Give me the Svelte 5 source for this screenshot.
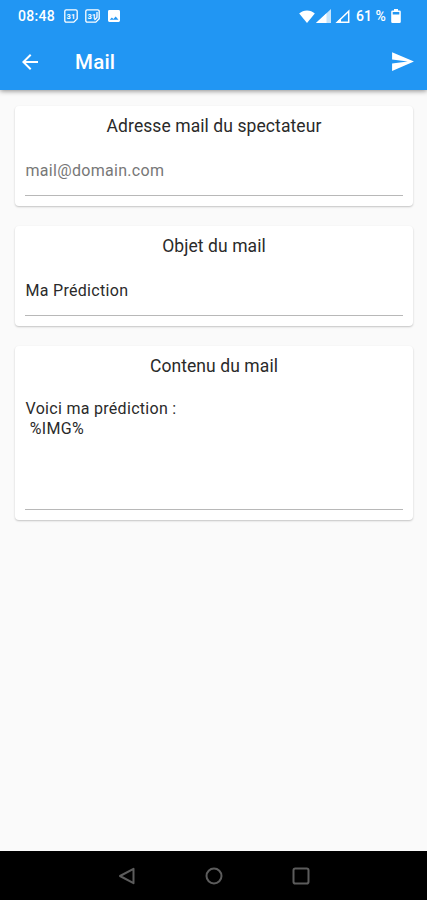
<script>
    const fields = [
        { title: "Adresse mail du spectateur", value: "mail@domain.com", hint: true },
        { title: "Objet du mail", value: "Ma Prédiction" },
        { title: "Contenu du mail", value: "Voici ma prédiction :\n %IMG%", multiline: true }
    ];
</script>

<div class="screen">
    <header>
        <div class="status-bar">
            <span class="clock">08:48</span>
            <svg class="calendar" width="14" height="14" viewBox="0 0 14 14">
                <path d="M2.2.8h9.600a1.400 1.400 0 0 1 1.400 1.400v7.600L9.800 13.200H2.200A1.400 1.400 0 0 1 .8 11.800V2.200A1.400 1.400 0 0 1 2.200.8z" />
                <text x="6.9" y="9.6">31</text>
            </svg>
            <svg class="calendar second" width="15" height="14" viewBox="0 0 15 14">
                <path d="M2.2.8h10.600a1.400 1.400 0 0 1 1.400 1.400v7.600L10.800 13.200H2.200A1.400 1.400 0 0 1 .8 11.800V2.200A1.400 1.400 0 0 1 2.200.8zM12 3v5.500L9.500 11" />
                <text x="6.8" y="9.6">31</text>
            </svg>
            <svg class="picture" width="12" height="12" viewBox="0 0 12 12">
                <path fill="#fff" fill-rule="evenodd" d="M1.400 0h9.200A1.400 1.400 0 0 1 12 1.400v9.200a1.400 1.400 0 0 1-1.400 1.400H1.400A1.400 1.400 0 0 1 0 10.600V1.400A1.400 1.400 0 0 1 1.400 0zM1.700 9.700h8.800L7.700 6.500 5.400 8.900 3.900 7.400z" />
            </svg>

            <svg class="wifi" width="16" height="13" viewBox="0 0 16 13">
                <path fill="#fff" d="M8 13 .2 3.600C2.400 1.600 5 .6 8 .6s5.600 1 7.800 3z" />
            </svg>
            <svg class="signal" width="15" height="14" viewBox="0 0 15 14">
                <path fill="#fff" fill-opacity=".75" d="M15 0v14H0z" />
                <path fill="#fff" d="M10.500 4.200V14H0z" />
            </svg>
            <svg class="signal" width="15" height="14" viewBox="0 0 15 14">
                <path fill="none" stroke="#fff" stroke-width="1.500" d="M13.700 2.200v11H2.300z" />
                <path fill="#fff" d="M6 9v4.500H1.500z" />
            </svg>
            <span class="percent">61 %</span>
            <svg class="battery" width="10" height="14" viewBox="0 0 10 14">
                <path fill="#fff" fill-rule="evenodd" d="M3 0h4v1.400h1.500A1.300 1.300 0 0 1 9.800 2.700v10A1.300 1.300 0 0 1 8.500 14h-7A1.300 1.300 0 0 1 .2 12.700v-10a1.300 1.300 0 0 1 1.300-1.300H3zM1.700 3v2.500h6.600V3z" />
            </svg>
        </div>
        <div class="app-bar">
            <svg class="back" width="24" height="24" viewBox="0 0 24 24">
                <path fill="#fff" d="M20 11H7.830l5.590-5.590L12 4l-8 8 8 8 1.410-1.410L7.830 13H20v-2z" />
            </svg>
            <h1>Mail</h1>
            <svg class="send" width="25" height="25" viewBox="0 0 24 24">
                <path fill="#fff" d="M2.010 21 23 12 2.010 3 2 10l15 2-15 2z" />
            </svg>
        </div>
    </header>

    <main>
        {#each fields as field}
            <section class="card">
                <h2>{field.title}</h2>
                <div class="field" class:hint={field.hint} class:multiline={field.multiline}>{field.value}</div>
            </section>
        {/each}
    </main>

    <nav>
        <svg width="18" height="18" viewBox="0 0 18 18">
            <path d="M15.500 1.800v14.400L2 9z" />
        </svg>
        <svg width="18" height="18" viewBox="0 0 18 18">
            <circle cx="9" cy="9" r="7.500" />
        </svg>
        <svg width="18" height="18" viewBox="0 0 18 18">
            <rect x="1.500" y="1.500" width="15" height="15" rx="1.800" />
        </svg>
    </nav>
</div>

<style>
    :global(body) {
        margin: 0;
    }

    .screen {
        display: flex;
        flex-direction: column;
        height: 900px;
        background: #fafafa;
        color: #2a2a2a;
        font-family: Roboto, sans-serif;
        overflow: hidden;
    }

    svg {
        display: block;
        flex: none;
    }

    header {
        height: 90px;
        background: #2196f3;
        color: #fff;
        box-shadow: 0 1px 5px rgba(0, 0, 0, 0.45);
    }

    .status-bar {
        display: flex;
        align-items: center;
        height: 32px;
        padding: 0 26px 0 18px;
        font-size: 14px;
        font-weight: 500;
    }

    .clock {
        width: 46px;
        letter-spacing: 0.3px;
    }

    .calendar path {
        fill: none;
        stroke: #fff;
        stroke-width: 1.3;
    }

    .calendar text {
        fill: #fff;
        font-size: 7.5px;
        font-weight: 700;
        text-anchor: middle;
    }

    .second {
        margin-left: 7px;
    }

    .picture {
        margin-left: 8px;
    }

    .wifi {
        margin-left: auto;
    }

    .signal {
        margin-left: 1px;
    }

    .signal + .signal {
        margin-left: 4px;
    }

    .percent {
        margin-left: 6px;
        width: 35px;
        white-space: nowrap;
    }

    .app-bar {
        display: flex;
        align-items: center;
        height: 59px;
        padding: 0 12px 0 18px;
    }

    h1 {
        margin: 0 auto 0 33px;
        font-size: 20.5px;
        font-weight: 500;
        line-height: 24px;
        letter-spacing: 0.2px;
    }

    main {
        display: flex;
        flex: 1;
        flex-direction: column;
        gap: 20px;
        padding: 16px 14px 0 15px;
    }

    .card {
        padding: 8px 10px 10px;
        border-radius: 4px;
        background: #fff;
        box-shadow: 0 1px 2px rgba(0, 0, 0, 0.22);
    }

    h2 {
        margin: 0;
        font-size: 17.5px;
        font-weight: 400;
        line-height: 24px;
        letter-spacing: 0.08px;
        text-align: center;
    }

    .field {
        box-sizing: border-box;
        height: 58px;
        padding: 23px 0 0 0.5px;
        border-bottom: 1px solid #b8b8b8;
        font-size: 16px;
        line-height: 20px;
        letter-spacing: 0.3px;
        white-space: pre-wrap;
    }

    .hint {
        color: #777;
    }

    .multiline {
        height: 132px;
        padding-top: 21px;
    }

    nav {
        display: flex;
        justify-content: center;
        gap: 69px;
        box-sizing: border-box;
        height: 49px;
        padding-top: 16px;
        background: #000;
    }

    nav svg {
        fill: none;
        stroke: #5c5c5c;
        stroke-width: 2;
        stroke-linejoin: round;
    }
</style>
